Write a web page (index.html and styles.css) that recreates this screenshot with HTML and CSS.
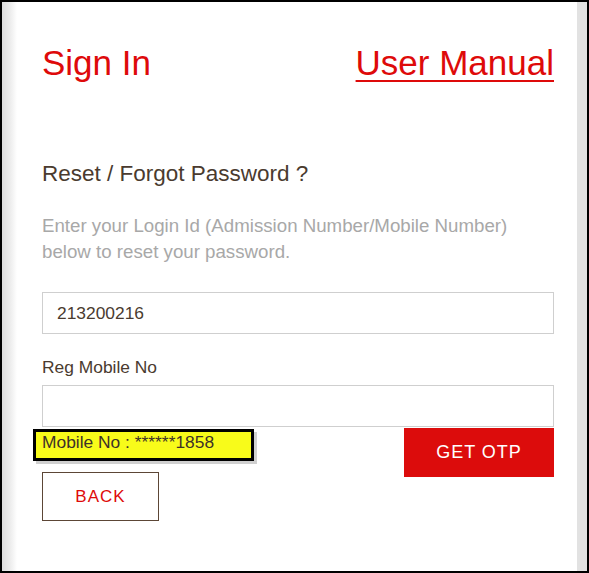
FILE: index.html
```html
<!DOCTYPE html>
<html>
<head lang="en">
    <meta charset="UTF-8">
    <title>Reset Password</title>
    <link rel="stylesheet" href="styles.css">
</head>
<body>
<div class="frame">
    <div class="panel">
        <div class="head">
            <span class="title">Sign In</span>
            <a href="" class="manual">User Manual</a>
        </div>
        <h3 class="sub">Reset / Forgot Password ?</h3>
        <p class="desc">Enter your Login Id (Admission Number/Mobile Number) below to reset your password.</p>
        <input type="text" class="field f1" value="213200216"/>
        <label class="lbl">Reg Mobile No</label>
        <input type="text" class="field f2" value=""/>
        <div class="row">
            <div class="left">
                <div class="mob">Mobile No : ******1858</div>
                <a href="" class="btn_back">BACK</a>
            </div>
            <a href="" class="btn_otp">GET OTP</a>
        </div>
    </div>
</div>
</body>
</html>
```

FILE: styles.css
```css
*{margin:0;padding:0;box-sizing:border-box;}
body{font-family:"Liberation Sans",Arial,sans-serif;background:#fff;}
a{text-decoration:none;}
.frame{width:589px;height:573px;border:2px solid #000;padding:0 10px 0 15px;
    background:linear-gradient(to right,#dcdcdc,#ececec 8px,#fff 15px,#fff 560px,#eeeeee 565px,#e2e2e2 570px);}
.panel{height:100%;background:#fff;padding:0 23px 0 25px;}
.head{display:flex;justify-content:space-between;padding-top:41px;height:81px;line-height:40px;font-size:35px;color:#de0a0a;}
.manual{color:#de0a0a;text-decoration:underline;text-decoration-thickness:2px;text-underline-offset:5px;}
.sub{margin-top:78px;font-size:22.5px;line-height:26px;font-weight:normal;color:#4a3b2f;}
.desc{margin-top:26px;font-size:18.7px;line-height:26px;color:#a8a8a8;}
.field{display:block;width:100%;height:42px;border:1px solid #cfcfcf;padding:0 14px;font-family:inherit;font-size:17.4px;color:#4a3b2f;outline:none;}
.f1{margin-top:27px;}
.lbl{display:block;margin-top:23px;font-size:17.4px;line-height:20px;color:#4a3b2f;}
.f2{margin-top:8px;}
.row{display:flex;justify-content:space-between;align-items:flex-start;margin-top:1px;}
.mob{margin:1px 0 0 -9px;width:221px;height:32px;border:3px solid #000;background:#f8fb1a;padding-left:6px;font-size:17.4px;line-height:21px;color:#3d3128;box-shadow:3px 3px 0 #d0d0d0;}
.btn_back{display:block;margin-top:11px;width:117px;height:49px;border:1px solid #5c4636;text-align:center;line-height:47px;font-size:17px;letter-spacing:1px;color:#de0a0a;}
.btn_otp{display:block;width:150px;height:49px;background:#dc0c0c;text-align:center;line-height:49px;font-size:18px;letter-spacing:1px;color:#fff;}
```
